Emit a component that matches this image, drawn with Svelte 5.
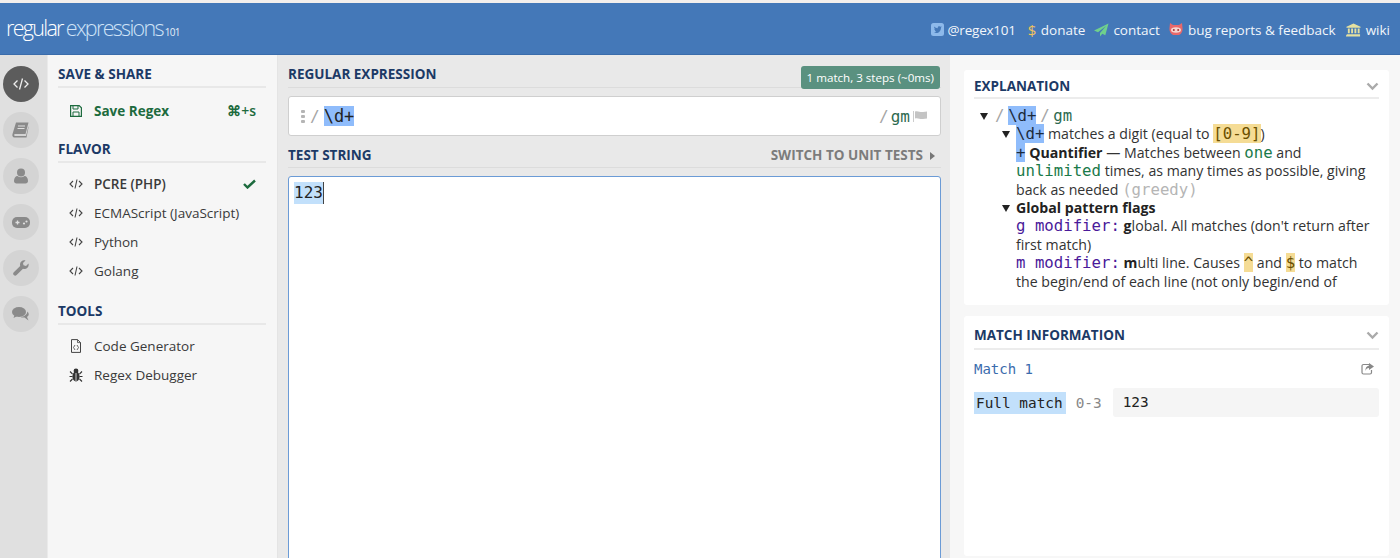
<script>
  const rail = [
    { active: true, d: 'code' },
    { d: 'book' },
    { d: 'user' },
    { d: 'game' },
    { d: 'wrench' },
    { d: 'chat' }
  ];
  const flavors = ['ECMAScript (JavaScript)', 'Python', 'Golang'];
</script>

{#snippet codeIcon()}
  <svg class="ico" viewBox="0 0 14 12" width="14" height="12"><path d="M4 3 1 6l3 3M10 3l3 3-3 3M8 1.500 6 10.500" fill="none" stroke="#444" stroke-width="1.100"/></svg>
{/snippet}

{#snippet chev()}
  <svg class="chev" width="13" height="9" viewBox="0 0 13 9"><path d="M1.500 1.500 6.500 6.500l5-5" fill="none" stroke="#aaa" stroke-width="2.400"/></svg>
{/snippet}

<div class="page">
  <header class="top">
    <div class="logo"><span class="l1">regular</span><span class="l2">expressions</span><span class="l3">101</span></div>
    <nav class="links">
      <span class="lnk g3"><svg width="13" height="13" viewBox="0 0 13 13"><rect width="13" height="13" rx="2.500" fill="#8db9ea"/><path d="M3 9.500c3.500 1.500 7-.5 7-5l1-1-1.300.3C9 3 8 3 7.200 3.600 6.700 4.100 6.600 4.800 6.800 5.300 5.400 5.300 4.200 4.600 3.300 3.600 3 4.600 3.300 5.500 4 6L3.300 5.900c.1.800.6 1.400 1.400 1.600l-.7.100c.2.600.8 1 1.400 1-.6.500-1.500.8-2.400.9z" fill="#4478b8"/></svg><span class="tw">@regex101</span></span>
      <span class="lnk"><span class="dollar">$</span>donate</span>
      <span class="lnk pull"><svg width="15" height="14" viewBox="0 0 15 14"><path d="M14.500.5 0 7.500l4 1.800L12 3 6 10v3.500l2.300-2.700 3 1.400z" fill="#6fd08c"/></svg>contact</span>
      <span class="lnk g5 pull"><svg width="14" height="13" viewBox="0 0 14 13"><path d="M1 0l3 2h6l3-2 .5 5c.6 3.500-1.500 6-3.500 7H4C2 11 0 8.500.5 5z" fill="#e8686a"/><ellipse cx="7" cy="7" rx="5" ry="2.800" fill="#f6d5d0"/><circle cx="4.800" cy="7" r="1" fill="#a33"/><circle cx="9.200" cy="7" r="1" fill="#a33"/></svg>bug reports &amp; feedback</span>
      <span class="lnk g5"><svg width="15" height="14" viewBox="0 0 16 14"><path d="M8 0 .5 3.500v1h15v-1zM2 5.500h2v5H2zM5.500 5.500h2v5h-2zM9 5.500h2v5H9zM12.500 5.500h2v5h-2zM1 11.500h14V14H0v-1z" fill="#e4e0a0"/></svg>wiki</span>
    </nav>
  </header>

  <div class="body">
    <aside class="rail">
      {#each rail as r}
        <div class="dot" class:active={r.active}>
          {#if r.d === 'code'}
            <svg width="18" height="14" viewBox="0 0 18 14"><path d="M5.500 3.500 2 7l3.500 3.500M12.500 3.500 16 7l-3.500 3.500M10.500 1.500 7.500 12.500" fill="none" stroke="#eee" stroke-width="1.300"/></svg>
          {:else if r.d === 'book'}
            <svg width="17" height="16" viewBox="0 0 17 16"><path d="M4 .5h12.500l-3 11.500H2.800C2 12 2 14 3 14h11l2.500-10v1.500L14.500 15.500H2.500C.5 15.500 0 13.500.5 12z" fill="#8a8a8a"/><path d="M6 4h7M5.500 6.500h7" stroke="#e0e0e0"/></svg>
          {:else if r.d === 'user'}
            <svg width="14" height="16" viewBox="0 0 14 16"><circle cx="7" cy="4.500" r="4" fill="#8a8a8a"/><path d="M0 13c0-3 1.500-5 3.500-5 1 .8 2.200 1.200 3.500 1.200S9.500 8.800 10.500 8c2 0 3.500 2 3.500 5 0 1.500-1 2.500-2.500 2.500h-9C1 15.500 0 14.500 0 13z" fill="#8a8a8a"/></svg>
          {:else if r.d === 'game'}
            <svg width="18" height="11" viewBox="0 0 18 11"><rect width="18" height="11" rx="5" fill="#8a8a8a"/><path d="M3.500 5.500h4M5.500 3.500v4" stroke="#e0e0e0" stroke-width="1.300"/><circle cx="12" cy="6.500" r="1.100" fill="#e0e0e0"/><circle cx="14.500" cy="4.500" r="1.100" fill="#e0e0e0"/></svg>
          {:else if r.d === 'wrench'}
            <svg width="16" height="16" viewBox="0 0 16 16"><path d="M15.500 3.500 13 6l-2.500-.7L10 3l2.500-2.500C10 -.3 7 1.500 7 4.500c0 .6.100 1 .2 1.400L.8 12.300c-1 1-.8 2 0 2.800s1.800 1 2.800 0L10 8.800c3.300 1.200 6.500-2 5.500-5.300z" fill="#8a8a8a"/></svg>
          {:else}
            <svg width="17" height="14" viewBox="0 0 17 14"><ellipse cx="7" cy="5" rx="7" ry="5" fill="#8a8a8a"/><path d="M2.500 8 1.500 11 5.500 9z" fill="#8a8a8a"/><path d="M15.300 4.500c1.700 1.500 2.200 4-.3 5.500l1.500 3.500-4-3c-1.500.2-3 0-4-.5 3.500-.3 7-2.500 6.800-5.500z" fill="#8a8a8a"/></svg>
          {/if}
        </div>
      {/each}
    </aside>

    <aside class="side">
      <h3>SAVE &amp; SHARE</h3>
      <div class="row save">
        <svg class="ico" width="12" height="12" viewBox="0 0 12 12"><path d="M.6.600h8.600l2.200 2.200v8.600H.6z" fill="none" stroke="#1d6b3e" stroke-width="1.200"/><path d="M3 1v3h5V1M3 11V7h6v4" fill="none" stroke="#1d6b3e"/></svg>
        <span class="grow">Save Regex</span><span class="kbd">⌘+s</span>
      </div>
      <h3 class="mt">FLAVOR</h3>
      <div class="row strong first">
        {@render codeIcon()}<span class="grow">PCRE (PHP)</span>
        <svg class="check" width="13" height="10" viewBox="0 0 13 10"><path d="M1 5l3.500 3.500L12 1.500" fill="none" stroke="#1d6b3e" stroke-width="2.400"/></svg>
      </div>
      {#each flavors as f}
        <div class="row">{@render codeIcon()}<span class="grow">{f}</span></div>
      {/each}
      <h3 class="mt2">TOOLS</h3>
      <div class="row first">
        <svg class="ico" width="14" height="14" viewBox="0 0 14 14"><path d="M2.500.6h6l3 3v9.800h-9z" fill="none" stroke="#444"/><path d="M8.500.6v3h3M6 6 4.500 8.500 6 11M8 6l1.500 2.500L8 11" fill="none" stroke="#444" stroke-width=".8"/></svg>
        <span class="grow">Code Generator</span>
      </div>
      <div class="row">
        <svg class="ico" width="14" height="14" viewBox="0 0 14 14"><ellipse cx="7" cy="8.500" rx="3.600" ry="5" fill="#333"/><circle cx="7" cy="3" r="2.400" fill="#333"/><path d="M1 3.500 3.500 6M13 3.500 10.500 6M.5 8.500h3M13.500 8.500h-3M1 13.500l2.500-2.500M13 13.500 10.500 11" stroke="#333" stroke-width="1.100"/><path d="M7 5v8" stroke="#f6f6f6" stroke-width=".8"/></svg>
        <span class="grow">Regex Debugger</span>
      </div>
    </aside>

    <main class="mid">
      <div class="head regex-head">
        <h3>REGULAR EXPRESSION</h3>
        <span class="badge">1 match, 3 steps (~0ms)</span>
      </div>
      <div class="regex">
        <span class="grip"><i></i><i></i><i></i></span>
        <span class="slash s1">/</span>
        <span class="mono hl">\d+</span>
        <span class="spacer"></span>
        <span class="slash s2">/</span>
        <span class="mono flags">gm</span>
        <svg width="15" height="11" viewBox="0 0 15 11"><path d="M.5 0v11" stroke="#ccc"/><path d="M2 .5c3-1 5 1 8 .5l4-.5v7l-4 .5c-3 .5-5-1.500-8-.5z" fill="#c4c4c4"/></svg>
      </div>
      <div class="head test-head">
        <h3>TEST STRING</h3>
        <span class="switch">SWITCH TO UNIT TESTS<svg width="6" height="8" viewBox="0 0 6 8"><path d="M0 0l5 4-5 4z" fill="#777"/></svg></span>
      </div>
      <div class="test"><span class="mono match">123</span><span class="caret"></span></div>
    </main>

    <section class="right">
      <div class="card expl">
        <div class="card-head"><h3>EXPLANATION</h3>{@render chev()}</div>
        <div class="tree">
          <div class="ln l0"><span class="tri"></span><span class="mono gray">/</span> <span class="mono hl2">\d+</span> <span class="mono gray">/</span> <span class="mono tflags">gm</span></div>
          <div class="ln l1x"><span class="tri"></span><span class="mono hl2">\d+</span> matches a digit (equal to <span class="mono yel">[0-9]</span>)</div>
          <div class="ln t"><span class="mono hl2">+</span> <b>Quantifier</b> — Matches between <span class="mono grn">one</span> and</div>
          <div class="ln t"><span class="mono grn">unlimited</span> times, as many times as possible, giving</div>
          <div class="ln t">back as needed <span class="mono gry">(greedy)</span></div>
          <div class="ln l1x"><span class="tri"></span><b>Global pattern flags</b></div>
          <div class="ln t"><span class="mono pur">g modifier:</span> <b>g</b>lobal. All matches (don't return after</div>
          <div class="ln t">first match)</div>
          <div class="ln t"><span class="mono pur">m modifier:</span> <b>m</b>ulti line. Causes <span class="mono yel">^</span> and <span class="mono yel">$</span> to match</div>
          <div class="ln t">the begin/end of each line (not only begin/end of</div>
        </div>
      </div>
      <div class="card info">
        <div class="card-head"><h3>MATCH INFORMATION</h3>{@render chev()}</div>
        <div class="m-title">
          <span class="mono">Match 1</span>
          <svg width="13" height="12" viewBox="0 0 13 12"><path d="M9 1.500H2.500a1.500 1.500 0 0 0-1.500 1.500v6.500A1.500 1.500 0 0 0 2.500 11H9a1.500 1.500 0 0 0 1.500-1.500V7" fill="none" stroke="#888" stroke-width="1.200"/><path d="M8 0l5 3.500L8 7V5C6 5 5 6 4.500 8c-.3-3 1-5 3.500-5.500z" fill="#888"/></svg>
        </div>
        <div class="m-row">
          <span class="mono full">Full match</span>
          <span class="mono range">0-3</span>
          <span class="mono val">123</span>
        </div>
      </div>
    </section>
  </div>
</div>

<style>
  :global(body) { margin: 0; }
  .page {
    width: 1400px; height: 558px; overflow: hidden; display: flex; flex-direction: column;
    font-family: "Open Sans", sans-serif; font-size: 13.5px; color: #2c2c2c; background: #f7f7f7;
    border-top: 3px solid #f3efec; box-sizing: border-box;
  }
  .top {
    height: 52px; flex: none; background: #4478b8; border-bottom: 1px solid #3a6cab; box-sizing: border-box;
    display: flex; align-items: center; justify-content: space-between; padding: 0 10px 0 6px; color: #fff;
  }
  .logo { display: flex; align-items: baseline; gap: 4px; font-size: 21.5px; font-weight: 300; letter-spacing: -1.7px; margin-top: -2px; white-space: nowrap; }
  .l1 { color: #fff; }
  .l2 { color: #cfe3f7; margin-left: -1px; }
  .l3 { font-size: 10px; font-weight: 400; color: #e6eef7; letter-spacing: -.7px; margin-left: -2px; }
  .links { display: flex; gap: 10px; font-size: 13.5px; color: #f2f6fb; margin-top: 2px; }
  .lnk { display: flex; align-items: center; gap: 4px; white-space: nowrap; }
  .pull { margin-left: -1px; }
  .tw { letter-spacing: -.22px; }
  .g3 { gap: 3px; }
  .g5 { gap: 5px; }
  .dollar { color: #efc25e; font-size: 15px; width: 9px; margin-left: 2px; }

  .body { flex: 1; display: flex; min-height: 0; }
  .rail {
    width: 48px; flex: none; background: #e0e0e0; display: flex; flex-direction: column; align-items: center;
    gap: 10px; padding-top: 11px; box-sizing: border-box; padding-right: 6px; border-right: 1px solid #eaeaea;
  }
  .dot { width: 36px; height: 36px; border-radius: 50%; background: #d4d4d4; display: flex; align-items: center; justify-content: center; flex: none; }
  .dot.active { background: #5c5c5c; }

  .side {
    width: 230px; flex: none; box-sizing: border-box; background: #f6f6f6; padding: 10px 11px 0 10px;
    border-right: 1px solid #e4e4e4;
  }
  h3 { margin: 0; font-size: 13.5px; font-weight: 700; color: #1c3a66; line-height: 19px; white-space: nowrap; }
  .side h3 { border-bottom: 2px solid #e8e8e8; padding-bottom: 2px; }
  .side .mt { margin-top: 7px; }
  .side .mt2 { margin-top: 16px; }
  .row { display: flex; align-items: center; height: 29px; box-sizing: border-box; padding: 0 10px 1px 11px; color: #3a3a3a; }
  .row.first { margin-top: 7px; }
  .row .ico { width: 14px; margin-right: 11px; flex: none; }
  .grow { flex: 1; white-space: nowrap; }
  .save { color: #1d6b3e; font-weight: 700; height: 45px; padding-bottom: 0; }
  .kbd { font-weight: 600; font-size: 14px; color: #1d6b3e; }
  .strong .grow { font-weight: 600; }

  .mid { flex: 1; min-width: 0; background: #e9e9e9; padding: 0 9px 0 10px; box-sizing: border-box; }
  .head { display: flex; justify-content: space-between; border-bottom: 1px solid #dcdcdc; }
  .regex-head { height: 33px; padding-top: 10px; box-sizing: border-box; align-items: flex-start; position: relative; }
  .badge {
    position: absolute; right: 1px; top: 11px; background: #5a9180; color: #fff; font-size: 11.600px; line-height: 23px; height: 23px;
    padding: 0 6px; border-radius: 3px; white-space: nowrap;
  }
  .regex {
    height: 40px; margin-top: 8px; background: #fff; border: 1px solid #cfcfcf; border-radius: 3px; box-sizing: border-box;
    display: flex; align-items: center; padding: 0 12px;
  }
  .grip { display: flex; flex-direction: column; gap: 2px; margin-right: 5px; }
  .grip i { width: 4px; height: 3px; background: #b5b5b5; display: block; border-radius: 1px; }
  .slash { color: #a5a5a5; font-family: "DejaVu Sans Mono", monospace; font-size: 16px; }
  .s1 { margin-right: 4px; }
  .s2 { margin-right: 2px; }
  .mono { font-family: "DejaVu Sans Mono", monospace; }
  .hl { background: #8fbcfb; color: #222; font-size: 17px; line-height: 20px; }
  .spacer { flex: 1; }
  .flags { color: #2d6a4f; font-size: 16px; margin-right: 3px; }
  .test-head { height: 32px; box-sizing: border-box; padding-top: 10px; }
  .switch { align-self: flex-start; color: #7c7c7c; font-weight: 700; font-size: 13.500px; line-height: 19px; display: flex; align-items: center; gap: 7px; padding-right: 5px; white-space: nowrap; }
  .test {
    margin-top: 8px; height: 420px; background: #fff; border: 1px solid #6b9bd6; border-radius: 3px; box-sizing: border-box;
    padding: 5px; display: flex; align-items: flex-start;
  }
  .match { background: #c2e0fb; color: #222; font-size: 16px; line-height: 22px; }
  .caret { width: 1px; height: 22px; background: #444; }

  .right { width: 450px; flex: none; background: #f7f7f7; padding: 15px 11px 0 14px; box-sizing: border-box; display: flex; flex-direction: column; gap: 11px; }
  .card { background: #fff; border-radius: 3px; padding: 0 10px; box-sizing: border-box; }
  .expl { height: 235px; overflow: hidden; }
  .info { height: 240px; }
  .card-head { display: flex; justify-content: space-between; align-items: center; border-bottom: 2px solid #ececec; box-sizing: border-box; }
  .expl .card-head { height: 29px; padding-top: 6px; }
  .info .card-head { height: 34px; padding-top: 7px; }
  .tree { font-size: 14.150px; line-height: 18.400px; padding-top: 8px; color: #333; white-space: nowrap; }
  .tree .mono { font-size: 15.700px; }
  .ln { position: relative; height: 18.400px; }
  .l0 { padding-left: 21px; }
  .l1x, .t { padding-left: 42px; }
  .tri { position: absolute; width: 0; height: 0; border-left: 4px solid transparent; border-right: 4px solid transparent; border-top: 7px solid #222; top: 6px; }
  .l0 .tri { left: 6px; }
  .l1x .tri { left: 28px; }
  .gray { color: #a5a5a5; }
  .tflags { color: #2d6a4f; }
  .hl2 { background: #8fbcfb; color: #1b2a3c; }
  .yel { background: #f5dc95; color: #6b5000; }
  .grn { color: #1a7a4a; }
  .gry { color: #b5b5b5; }
  .pur { color: #4a1a9a; }
  .tree b { color: #222; }
  .m-title { display: flex; justify-content: space-between; align-items: center; height: 30px; margin-top: 4px; color: #3b6cad; padding-right: 5px; }
  .m-title .mono { font-size: 14px; }
  .m-row { display: flex; align-items: center; margin-top: 4px; }
  .full { background: #c2e0fb; color: #222; line-height: 22px; padding: 0 3px 0 2px; font-size: 14.400px; white-space: nowrap; }
  .range { color: #888; margin-left: 10px; width: 37px; font-size: 14.400px; }
  .val { flex: 1; background: #f5f5f5; line-height: 29px; padding-left: 10px; border-radius: 3px; font-size: 14.400px; color: #222; }
</style>
